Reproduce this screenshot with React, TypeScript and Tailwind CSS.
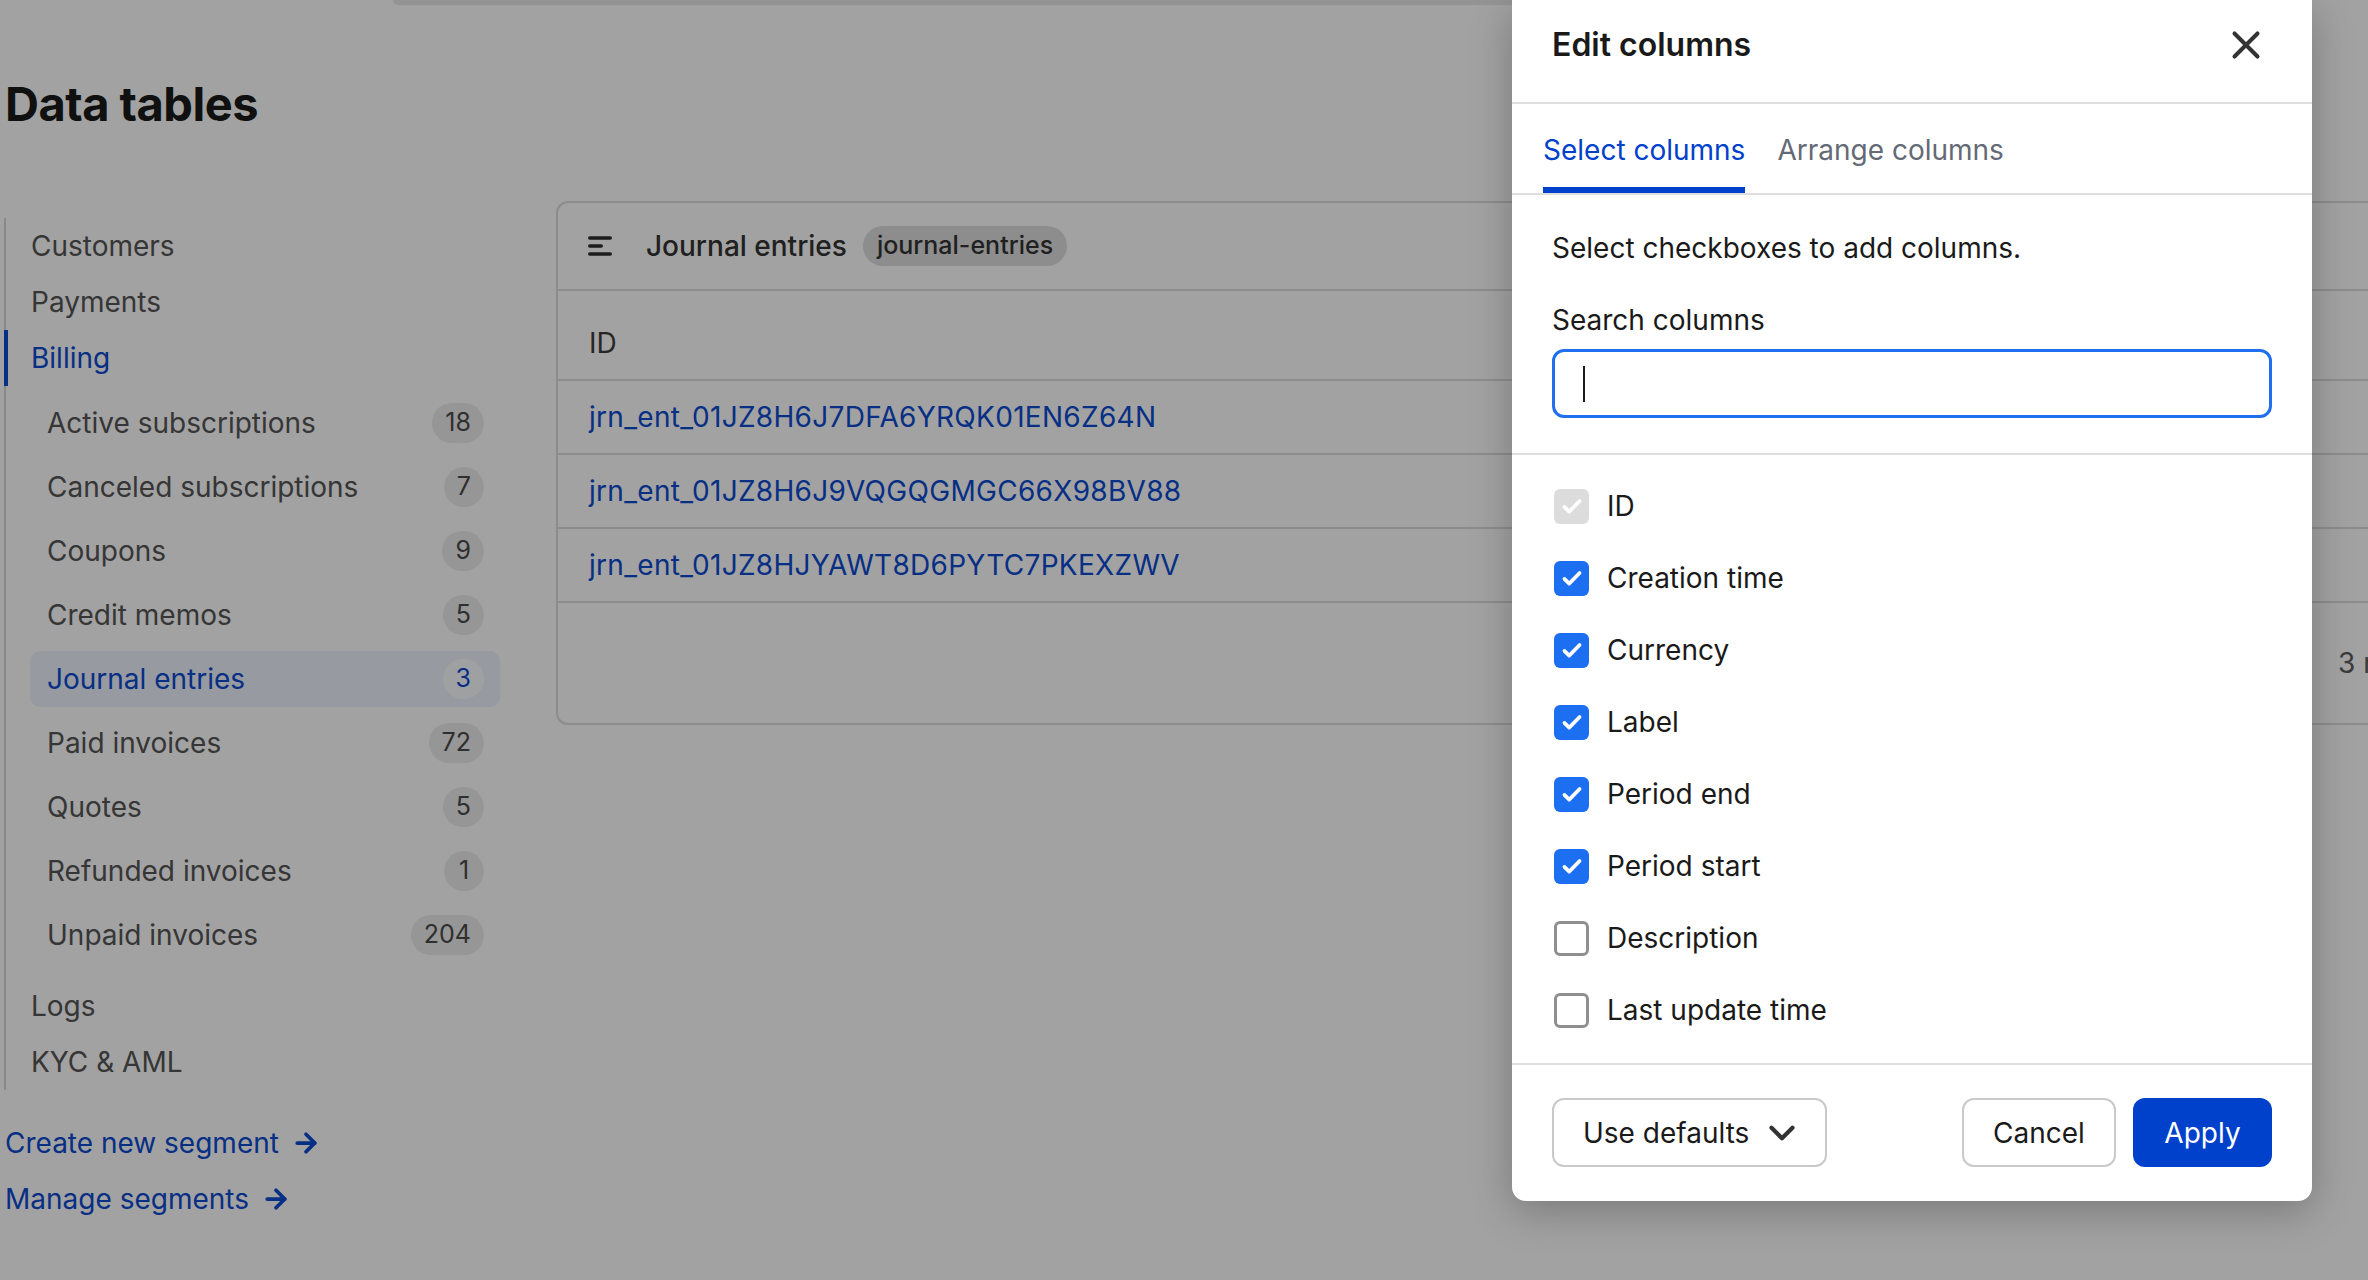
import { ArrowRight, ChevronDown, X } from 'lucide-react';

const subItems = [
  { label: 'Active subscriptions', count: 18 },
  { label: 'Canceled subscriptions', count: 7 },
  { label: 'Coupons', count: 9 },
  { label: 'Credit memos', count: 5 },
  { label: 'Journal entries', count: 3, active: true },
  { label: 'Paid invoices', count: 72 },
  { label: 'Quotes', count: 5 },
  { label: 'Refunded invoices', count: 1 },
  { label: 'Unpaid invoices', count: 204 },
];

const rows = [
  'jrn_ent_01JZ8H6J7DFA6YRQK01EN6Z64N',
  'jrn_ent_01JZ8H6J9VQGQGMGC66X98BV88',
  'jrn_ent_01JZ8HJYAWT8D6PYTC7PKEXZWV',
];

const columns = [
  { label: 'ID', state: 'disabled' },
  { label: 'Creation time', state: 'on' },
  { label: 'Currency', state: 'on' },
  { label: 'Label', state: 'on' },
  { label: 'Period end', state: 'on' },
  { label: 'Period start', state: 'on' },
  { label: 'Description', state: 'off' },
  { label: 'Last update time', state: 'off' },
];

const CheckMark = () => (
  <svg width="26" height="26" viewBox="0 0 24 24" fill="none">
    <path d="M5 12.8l4.4 4.4L19 7.4" stroke="white" strokeWidth="3.4" strokeLinecap="round" strokeLinejoin="round" />
  </svg>
);

const Checkbox = ({ state }: { state: string }) => {
  if (state === 'off') {
    return <div className="w-[35px] h-[35px] rounded-[6px] border-[3px] border-[#8f8f8f] bg-white" />;
  }
  return (
    <div
      className={`w-[35px] h-[35px] rounded-[6px] flex items-center justify-center ${
        state === 'disabled' ? 'bg-[#dcdcdc]' : 'bg-[#1c6ff0]'
      }`}
    >
      <CheckMark />
    </div>
  );
};

const ListIcon = () => (
  <svg width="24" height="20" viewBox="0 0 24 20" fill="none">
    <path d="M1.75 2h20.5M1.75 10h11.5M1.75 18h20.5" stroke="#2f2f2f" strokeWidth="3.5" strokeLinecap="round" />
  </svg>
);

export default function App() {
  return (
    <div className="relative w-[2368px] h-[1280px] overflow-hidden bg-white [font-family:Inter,sans-serif]">
      {/* page behind the dialog */}
      <div className="flex flex-col">
        <div className="h-[5px] ml-[393px] w-[1400px] bg-[#e9e9e9] rounded-bl-[10px]" />
        <h1 className="mt-[71px] ml-[5px] h-[56px] leading-[56px] text-[47px] font-bold text-[#1a1a1a] tracking-[-0.5px]">
          Data tables
        </h1>

        <div className="mt-[69px] flex items-start">
          {/* sidebar */}
          <div className="w-[556px] shrink-0 flex flex-col">
            <div className="mt-[17px] ml-[4px] border-l-[2px] border-[#d6d6d6] flex flex-col text-[28px] text-[#555555]">
              <div className="h-[56px] flex items-center pl-[25px]">Customers</div>
              <div className="h-[56px] flex items-center pl-[25px]">Payments</div>
              <div className="h-[56px] -ml-[2px] border-l-[4px] border-[#0b4ad0] flex items-center pl-[23px] text-[#0b4ad0]">
                Billing
              </div>
              <div className="mt-[9px] flex flex-col gap-[8px]">
                {subItems.map((item) => (
                  <div
                    key={item.label}
                    className={`ml-[24px] w-[470px] h-[56px] rounded-[10px] flex items-center justify-between pl-[17px] pr-[16px] ${
                      item.active ? 'bg-[#eef2fc] text-[#0b4ad0]' : ''
                    }`}
                  >
                    <span>{item.label}</span>
                    <span
                      className={`min-w-[40px] h-[40px] px-[13px] rounded-full flex items-center justify-center text-[25px] ${
                        item.active ? 'bg-[#fbfcff] text-[#0b4ad0]' : 'bg-[#ececec] text-[#4a4a4a]'
                      }`}
                    >
                      {item.count}
                    </span>
                  </div>
                ))}
              </div>
              <div className="mt-[15px] h-[56px] flex items-center pl-[25px]">Logs</div>
              <div className="h-[56px] flex items-center pl-[25px]">KYC &amp; AML</div>
            </div>

            <div className="mt-[33px] ml-[5px] flex flex-col gap-[16px] text-[28px] text-[#0b4ad0]">
              <div className="h-[40px] flex items-center gap-[12px]">
                Create new segment <ArrowRight size={30} strokeWidth={3} />
              </div>
              <div className="h-[40px] flex items-center gap-[12px]">
                Manage segments <ArrowRight size={30} strokeWidth={3} />
              </div>
            </div>
          </div>

          {/* table card */}
          <div className="w-[1900px] shrink-0 rounded-[12px] border-2 border-[#dddddd] flex flex-col">
            <div className="h-[88px] border-b-2 border-[#dddddd] flex items-center pl-[30px]">
              <ListIcon />
              <span className="ml-[34px] text-[28px] font-medium text-[#333333]">Journal entries</span>
              <span className="ml-[16px] h-[40px] px-[14px] rounded-full bg-[#dedede] flex items-center text-[25px] font-medium text-[#333333]">
                journal-entries
              </span>
            </div>
            <div className="h-[90px] border-b-2 border-[#dddddd] flex items-center pt-[16px] pl-[31px] text-[28px] text-[#3d3d3d]">
              ID
            </div>
            {rows.map((id) => (
              <div
                key={id}
                className="h-[74px] border-b-2 border-[#dddddd] flex items-center pl-[31px] text-[28px] tracking-[0.3px] text-[#0b4ad0]"
              >
                {id}
              </div>
            ))}
            <div className="h-[120px] flex items-center pl-[1780px] text-[28px] text-[#5e5e5e]">3 results</div>
          </div>
        </div>
      </div>

      {/* dim overlay */}
      <div className="absolute inset-0 bg-black/[0.365]" />

      {/* dialog */}
      <div className="absolute left-[1512px] top-0 w-[800px] h-[1201px] bg-white rounded-b-[14px] shadow-[0_10px_40px_rgba(0,0,0,0.25)] flex flex-col text-[#1a1a1a]">
        <div className="h-[104px] shrink-0 border-b-2 border-[#dedede] flex items-start justify-between pl-[40px] pr-[54px] pt-[25px]">
          <span className="leading-[40px] text-[32px] font-semibold">Edit columns</span>
          <X size={46} strokeWidth={2.1} className="-mt-[3px] -mr-[11px] text-[#333333]" />
        </div>

        <div className="h-[91px] shrink-0 border-b-2 border-[#dedede] flex items-end gap-[32px] px-[31px] text-[28px]">
          <div className="flex flex-col">
            <span className="leading-[40px] text-[#0041cc]">Select columns</span>
            <div className="mt-[17px] h-[6px] bg-[#0041cc]" />
          </div>
          <div className="flex flex-col">
            <span className="leading-[40px] text-[#646a75]">Arrange columns</span>
            <div className="mt-[17px] h-[6px]" />
          </div>
        </div>

        <div className="shrink-0 border-b-2 border-[#dedede] px-[40px] pt-[33px] pb-[35px] text-[28px]">
          <div className="leading-[40px]">Select checkboxes to add columns.</div>
          <div className="mt-[32px] leading-[40px]">Search columns</div>
          <div className="mt-[9px] h-[69px] rounded-[12px] border-[3px] border-[#1f6ff0] flex items-center pl-[28px]">
            <div className="w-[2px] h-[36px] bg-[#1a1a1a]" />
          </div>
        </div>

        <div className="shrink-0 border-b-2 border-[#dedede] pt-[15px] pb-[17px] pl-[42px] flex flex-col">
          {columns.map((c) => (
            <div key={c.label} className="h-[72px] flex items-center gap-[18px] text-[28px]">
              <Checkbox state={c.state} />
              <span>{c.label}</span>
            </div>
          ))}
        </div>

        <div className="flex items-center justify-between px-[40px] pt-[33px] text-[28px]">
          <div className="w-[275px] h-[69px] rounded-[12px] border-2 border-[#c9c9c9] flex items-center justify-between pl-[29px] pr-[22px]">
            <span>Use defaults</span>
            <ChevronDown size={42} strokeWidth={2.4} className="text-[#333333]" />
          </div>
          <div className="flex gap-[17px]">
            <div className="w-[154px] h-[69px] rounded-[12px] border-2 border-[#c9c9c9] flex items-center justify-center">
              Cancel
            </div>
            <div className="w-[139px] h-[69px] rounded-[12px] bg-[#0041cc] text-white flex items-center justify-center">
              Apply
            </div>
          </div>
        </div>
      </div>
    </div>
  );
}
